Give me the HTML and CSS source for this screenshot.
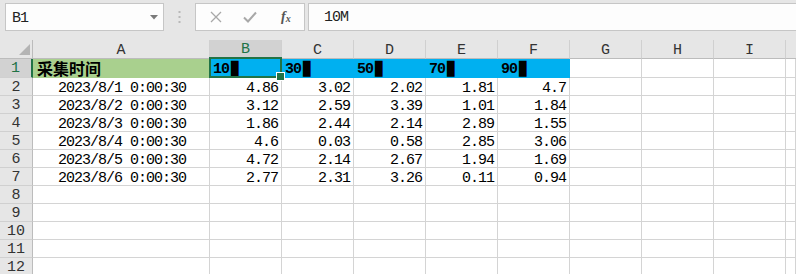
FILE: index.html
```html
<!DOCTYPE html>
<html>
<head>
<meta charset="utf-8">
<link rel="stylesheet" href="styles.css">
</head>
<body>
<div class="app">
  <div class="fbar">
    <div class="namebox">
      <span class="nb-text">B1</span>
      <svg class="dd" width="8" height="5" viewBox="0 0 8 5"><path d="M0 0H8L4 4.5Z" fill="#7a7a7a"/></svg>
    </div>
    <div class="grip">
      <svg width="3" height="12" viewBox="0 0 3 12"><rect x="0.5" y="0" width="2" height="2" fill="#b8b8b8"/><rect x="0.5" y="5" width="2" height="2" fill="#b8b8b8"/><rect x="0.5" y="10" width="2" height="2" fill="#b8b8b8"/></svg>
    </div>
    <div class="btns">
      <svg class="ic" width="12" height="12" viewBox="0 0 12 12"><path d="M1 1L11 11M11 1L1 11" stroke="#a8a8a8" stroke-width="1.3" fill="none"/></svg>
      <svg class="ic" width="14" height="12" viewBox="0 0 14 12"><path d="M1 6.5L5 10.5L13 1.5" stroke="#a8a8a8" stroke-width="2" fill="none"/></svg>
      <span class="fx">f<sub>x</sub></span>
    </div>
    <div class="finput">10M</div>
  </div>
  <div class="sheet">
    <div class="corner"><span class="tri"></span></div>
    <div class="ch">A</div>
    <div class="ch sel">B</div>
    <div class="ch">C</div>
    <div class="ch">D</div>
    <div class="ch">E</div>
    <div class="ch">F</div>
    <div class="ch">G</div>
    <div class="ch">H</div>
    <div class="ch">I</div>
    <div class="ch last"></div>

    <div class="rh sel">1</div>
    <div class="c green cjk">采集时间</div>
    <div class="c blue hd active">10<span class="blk">▮</span></div>
    <div class="c blue hd">30<span class="blk">▮</span></div>
    <div class="c blue hd">50<span class="blk">▮</span></div>
    <div class="c blue hd">70<span class="blk">▮</span></div>
    <div class="c blue hd">90<span class="blk">▮</span></div>
    <div class="c"></div><div class="c"></div><div class="c"></div><div class="c"></div>

    <div class="rh">2</div>
    <div class="c dt">2023/8/1 0:00:30</div>
    <div class="c n">4.86</div><div class="c n">3.02</div><div class="c n">2.02</div><div class="c n">1.81</div><div class="c n">4.7</div>
    <div class="c"></div><div class="c"></div><div class="c"></div><div class="c"></div>

    <div class="rh">3</div>
    <div class="c dt">2023/8/2 0:00:30</div>
    <div class="c n">3.12</div><div class="c n">2.59</div><div class="c n">3.39</div><div class="c n">1.01</div><div class="c n">1.84</div>
    <div class="c"></div><div class="c"></div><div class="c"></div><div class="c"></div>

    <div class="rh">4</div>
    <div class="c dt">2023/8/3 0:00:30</div>
    <div class="c n">1.86</div><div class="c n">2.44</div><div class="c n">2.14</div><div class="c n">2.89</div><div class="c n">1.55</div>
    <div class="c"></div><div class="c"></div><div class="c"></div><div class="c"></div>

    <div class="rh">5</div>
    <div class="c dt">2023/8/4 0:00:30</div>
    <div class="c n">4.6</div><div class="c n">0.03</div><div class="c n">0.58</div><div class="c n">2.85</div><div class="c n">3.06</div>
    <div class="c"></div><div class="c"></div><div class="c"></div><div class="c"></div>

    <div class="rh">6</div>
    <div class="c dt">2023/8/5 0:00:30</div>
    <div class="c n">4.72</div><div class="c n">2.14</div><div class="c n">2.67</div><div class="c n">1.94</div><div class="c n">1.69</div>
    <div class="c"></div><div class="c"></div><div class="c"></div><div class="c"></div>

    <div class="rh">7</div>
    <div class="c dt">2023/8/6 0:00:30</div>
    <div class="c n">2.77</div><div class="c n">2.31</div><div class="c n">3.26</div><div class="c n">0.11</div><div class="c n">0.94</div>
    <div class="c"></div><div class="c"></div><div class="c"></div><div class="c"></div>

    <div class="rh">8</div>
    <div class="c"></div><div class="c"></div><div class="c"></div><div class="c"></div><div class="c"></div><div class="c"></div><div class="c"></div><div class="c"></div><div class="c"></div><div class="c"></div>
    <div class="rh">9</div>
    <div class="c"></div><div class="c"></div><div class="c"></div><div class="c"></div><div class="c"></div><div class="c"></div><div class="c"></div><div class="c"></div><div class="c"></div><div class="c"></div>
    <div class="rh">10</div>
    <div class="c"></div><div class="c"></div><div class="c"></div><div class="c"></div><div class="c"></div><div class="c"></div><div class="c"></div><div class="c"></div><div class="c"></div><div class="c"></div>
    <div class="rh">11</div>
    <div class="c"></div><div class="c"></div><div class="c"></div><div class="c"></div><div class="c"></div><div class="c"></div><div class="c"></div><div class="c"></div><div class="c"></div><div class="c"></div>
    <div class="rh">12</div>
    <div class="c"></div><div class="c"></div><div class="c"></div><div class="c"></div><div class="c"></div><div class="c"></div><div class="c"></div><div class="c"></div><div class="c"></div><div class="c"></div>
  </div>
</div>
</body>
</html>
```

FILE: styles.css
```css
* { box-sizing: border-box; }
html, body { margin: 0; padding: 0; }
body {
  width: 796px;
  height: 274px;
  overflow: hidden;
  background: #e6e6e6;
  font-family: "Liberation Mono", "DejaVu Sans Mono", monospace;
  font-size: 15px;
  color: #000;
}
.app { display: flex; flex-direction: column; }

.fbar {
  display: flex;
  align-items: flex-start;
  height: 40px;
  padding-top: 3px;
  background: #e6e6e6;
}
.namebox {
  margin-left: 5px;
  width: 159px;
  height: 28px;
  background: #fdfdfd;
  border: 1px solid #c6c6c6;
  display: flex;
  align-items: center;
  justify-content: space-between;
  padding: 0 5px 0 6px;
}
.nb-text { font-size: 15px; letter-spacing: -1px; color: #222; padding-top: 2px; }
.grip {
  width: 31px;
  height: 28px;
  display: flex;
  align-items: center;
  justify-content: center;
}
.btns {
  width: 110px;
  height: 28px;
  background: #fdfdfd;
  border: 1px solid #c6c6c6;
  display: flex;
  align-items: center;
  padding-left: 14px;
}
.btns .ic:first-child { margin-right: 21px; }
.btns .ic:nth-child(2) { margin-right: 24px; }
.fx {
  font-family: "Liberation Serif", serif;
  font-style: italic;
  font-size: 14px;
  color: #555;
  font-weight: bold;
}
.fx sub { font-size: 10px; vertical-align: -1px; }
.finput {
  margin-left: 3px;
  flex: 1;
  height: 28px;
  background: #fdfdfd;
  border: 1px solid #c6c6c6;
  border-right: none;
  padding: 5px 0 0 15px;
  font-size: 15px;
  letter-spacing: -1px;
  color: #222;
}

.sheet {
  display: grid;
  grid-template-columns: 33px 177px repeat(8, 72px) 1fr;
  grid-template-rows: 19px 19px repeat(11, 18px);
  background: #fff;
}
.corner, .ch, .rh {
  background: #e6e6e6;
  color: #333;
  font-size: 15px;
  display: flex;
  align-items: center;
  justify-content: center;
}
.corner {
  position: relative;
  border-right: 1px solid #bcbcbc;
  border-bottom: 1px solid #bcbcbc;
}
.tri {
  position: absolute;
  right: 2px;
  bottom: 3px;
  width: 0;
  height: 0;
  border-left: 11px solid transparent;
  border-bottom: 11px solid #b4b4b4;
}
.ch {
  border-right: 1px solid #d0d0d0;
  border-bottom: 1px solid #bcbcbc;
  padding-top: 2px;
}
.ch.last { border-right: none; }
.ch.sel {
  background: #d2d2d2;
  color: #217346;
  border-bottom: 2px solid #217346;
}
.rh {
  border-right: 1px solid #bcbcbc;
  border-bottom: 1px solid #d0d0d0;
  padding-top: 1px;
}
.rh.sel {
  background: #d2d2d2;
  color: #217346;
  border-right: 2px solid #217346;
}
.c {
  border-right: 1px solid #d4d4d4;
  border-bottom: 1px solid #d4d4d4;
  white-space: nowrap;
  overflow: visible;
  line-height: 17px;
  padding-top: 2px;
  letter-spacing: -1px;
}
.green { background: #a9d08e; border-color: #a9d08e; }
.blue { background: #00b0f0; border-color: #00b0f0; }
.cjk {
  font-family: "Noto Sans CJK SC", sans-serif;
  font-weight: bold;
  font-size: 16px;
  letter-spacing: 0;
  padding: 0 0 0 4px;
  line-height: 18px;
}
.hd {
  font-weight: bold;
  padding-left: 3px;
  font-size: 15px;
}
.blk {
  font-family: "DejaVu Sans", sans-serif;
  font-size: 21px;
  line-height: 10px;
  vertical-align: -1px;
  letter-spacing: 0;
  margin-left: 0;
}
.active { position: relative; }
.active::after {
  content: "";
  position: absolute;
  left: -1px;
  top: -2px;
  right: -1px;
  bottom: -1px;
  border: 2px solid #217346;
}
.active::before {
  content: "";
  position: absolute;
  right: -4px;
  bottom: -4px;
  width: 7px;
  height: 7px;
  background: #217346;
  border: 1px solid #fff;
  z-index: 2;
}
.n { text-align: right; padding-right: 3px; }
.dt { text-align: right; padding-right: 23px; }
```
